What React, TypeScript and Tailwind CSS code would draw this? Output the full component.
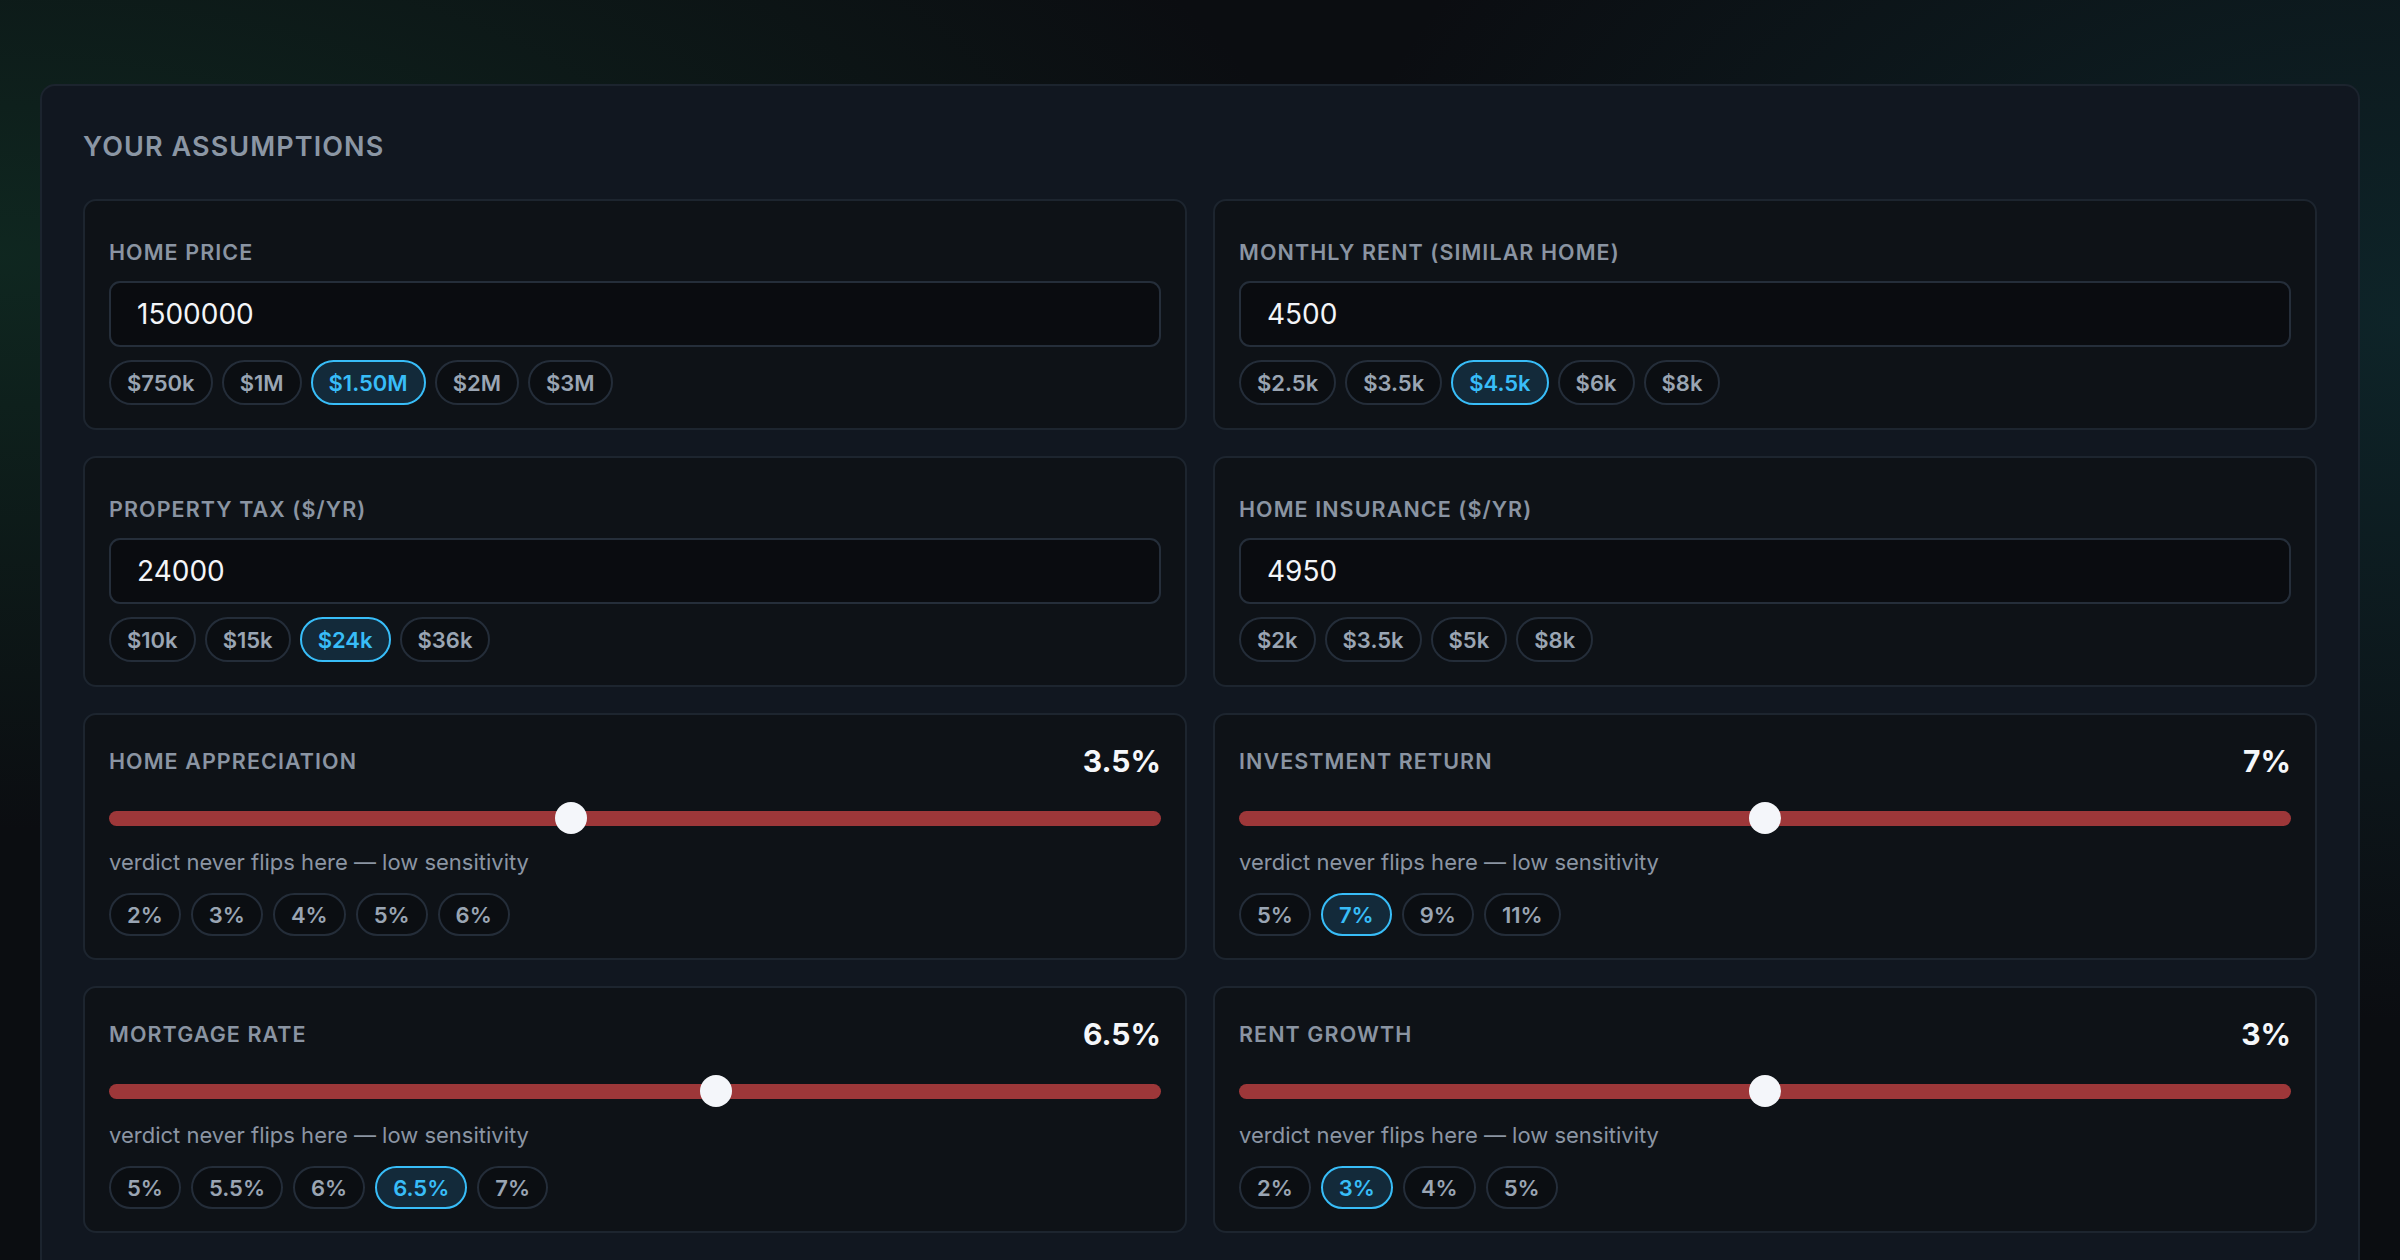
import React from "react"

type InputField = {
  label: string
  value: string
  chips: string[]
  active?: string
}

type SliderField = {
  label: string
  display: string
  value: number
  min: number
  max: number
  chips: string[]
  active?: string
}

const inputFields: InputField[] = [
  { label: "Home price", value: "1500000", chips: ["$750k", "$1M", "$1.50M", "$2M", "$3M"], active: "$1.50M" },
  { label: "Monthly rent (similar home)", value: "4500", chips: ["$2.5k", "$3.5k", "$4.5k", "$6k", "$8k"], active: "$4.5k" },
  { label: "Property tax ($/yr)", value: "24000", chips: ["$10k", "$15k", "$24k", "$36k"], active: "$24k" },
  { label: "Home insurance ($/yr)", value: "4950", chips: ["$2k", "$3.5k", "$5k", "$8k"] },
]

const sliderFields: SliderField[] = [
  { label: "Home appreciation", display: "3.5%", value: 3.5, min: 0, max: 8, chips: ["2%", "3%", "4%", "5%", "6%"] },
  { label: "Investment return", display: "7%", value: 7, min: 0, max: 14, chips: ["5%", "7%", "9%", "11%"], active: "7%" },
  { label: "Mortgage rate", display: "6.5%", value: 6.5, min: 1, max: 10.5, chips: ["5%", "5.5%", "6%", "6.5%", "7%"], active: "6.5%" },
  { label: "Rent growth", display: "3%", value: 3, min: 0, max: 6, chips: ["2%", "3%", "4%", "5%"], active: "3%" },
]

function Chip({ text, active, tall }: { text: string; active?: boolean; tall?: boolean }) {
  return (
    <button
      className={
        (tall ? "h-[45px] " : "h-[43px] ") +
        (active
          ? "border-[#38bdf8] bg-[#132a3a] text-[#38bdf8] "
          : "border-[#242d39] bg-[#0b0e12] text-[#9aa5b3] ") +
        "flex items-center rounded-full border-2 px-[16px] text-[22px] font-semibold leading-none"
      }
    >
      {text}
    </button>
  )
}

function Label({ children }: { children: React.ReactNode }) {
  return (
    <span className="text-[21.5px] font-semibold uppercase tracking-[0.05em] text-[#8a94a2]">
      {children}
    </span>
  )
}

function InputCard({ f }: { f: InputField }) {
  return (
    <div className="rounded-[13px] border-2 border-[#1d252f] bg-[#0e1217] px-[24px] pt-[35px] pb-[23px]">
      <div className="mb-[13px] flex h-[32px] items-center">
        <Label>{f.label}</Label>
      </div>
      <input
        defaultValue={f.value}
        className="h-[66px] w-full rounded-[11px] border-2 border-[#252e3a] bg-[#0a0c10] px-[26px] text-[28px] text-[#f3f5f8] outline-none"
      />
      <div className="mt-[13px] flex gap-[9px]">
        {f.chips.map((c) => (
          <Chip key={c} text={c} active={c === f.active} tall />
        ))}
      </div>
    </div>
  )
}

function SliderCard({ f }: { f: SliderField }) {
  const pct = (f.value - f.min) / (f.max - f.min)

  return (
    <div className="rounded-[13px] border-2 border-[#1d252f] bg-[#0e1217] px-[24px] pt-[25px] pb-[22px]">
      <div className="flex h-[42px] items-center justify-between">
        <Label>{f.label}</Label>
        <span className="text-[30px] font-bold text-[#f5f7fa]">{f.display}</span>
      </div>

      {/* track + thumb */}
      <div className="relative mt-[20px] flex h-[32px] items-center">
        <div className="h-[15px] w-full rounded-full bg-[#9d3739]" />
        <div
          className="absolute top-0 h-[32px] w-[32px] rounded-full bg-[#f4f6fa]"
          style={{ left: `calc(${pct} * (100% - 32px))` }}
        />
      </div>

      <p className="mt-[13px] text-[22px] leading-[30px] text-[#8b95a3]">
        verdict never flips here — low sensitivity
      </p>

      <div className="mt-[16px] flex gap-[10px]">
        {f.chips.map((c) => (
          <Chip key={c} text={c} active={c === f.active} />
        ))}
      </div>
    </div>
  )
}

export default function App() {
  return (
    <div
      className="min-h-screen bg-[#0b0d11] bg-[radial-gradient(ellipse_55%_45%_at_0%_20%,rgba(20,70,50,0.45),transparent),radial-gradient(ellipse_45%_55%_at_100%_25%,rgba(18,70,75,0.4),transparent)] px-[40px] pt-[84px] font-['Inter',sans-serif]"
    >
      <div className="rounded-[15px] border-2 border-[#1c242e] bg-[#111720] px-[41px] pt-[42px] pb-[42px]">
        <h2 className="mb-[33px] text-[27px] font-semibold uppercase leading-[38px] tracking-[0.04em] text-[#8b96a4]">
          Your Assumptions
        </h2>

        <div className="grid grid-cols-2 gap-[26px]">
          {inputFields.map((f) => (
            <InputCard key={f.label} f={f} />
          ))}
          {sliderFields.map((f) => (
            <SliderCard key={f.label} f={f} />
          ))}
        </div>
      </div>
    </div>
  )
}
